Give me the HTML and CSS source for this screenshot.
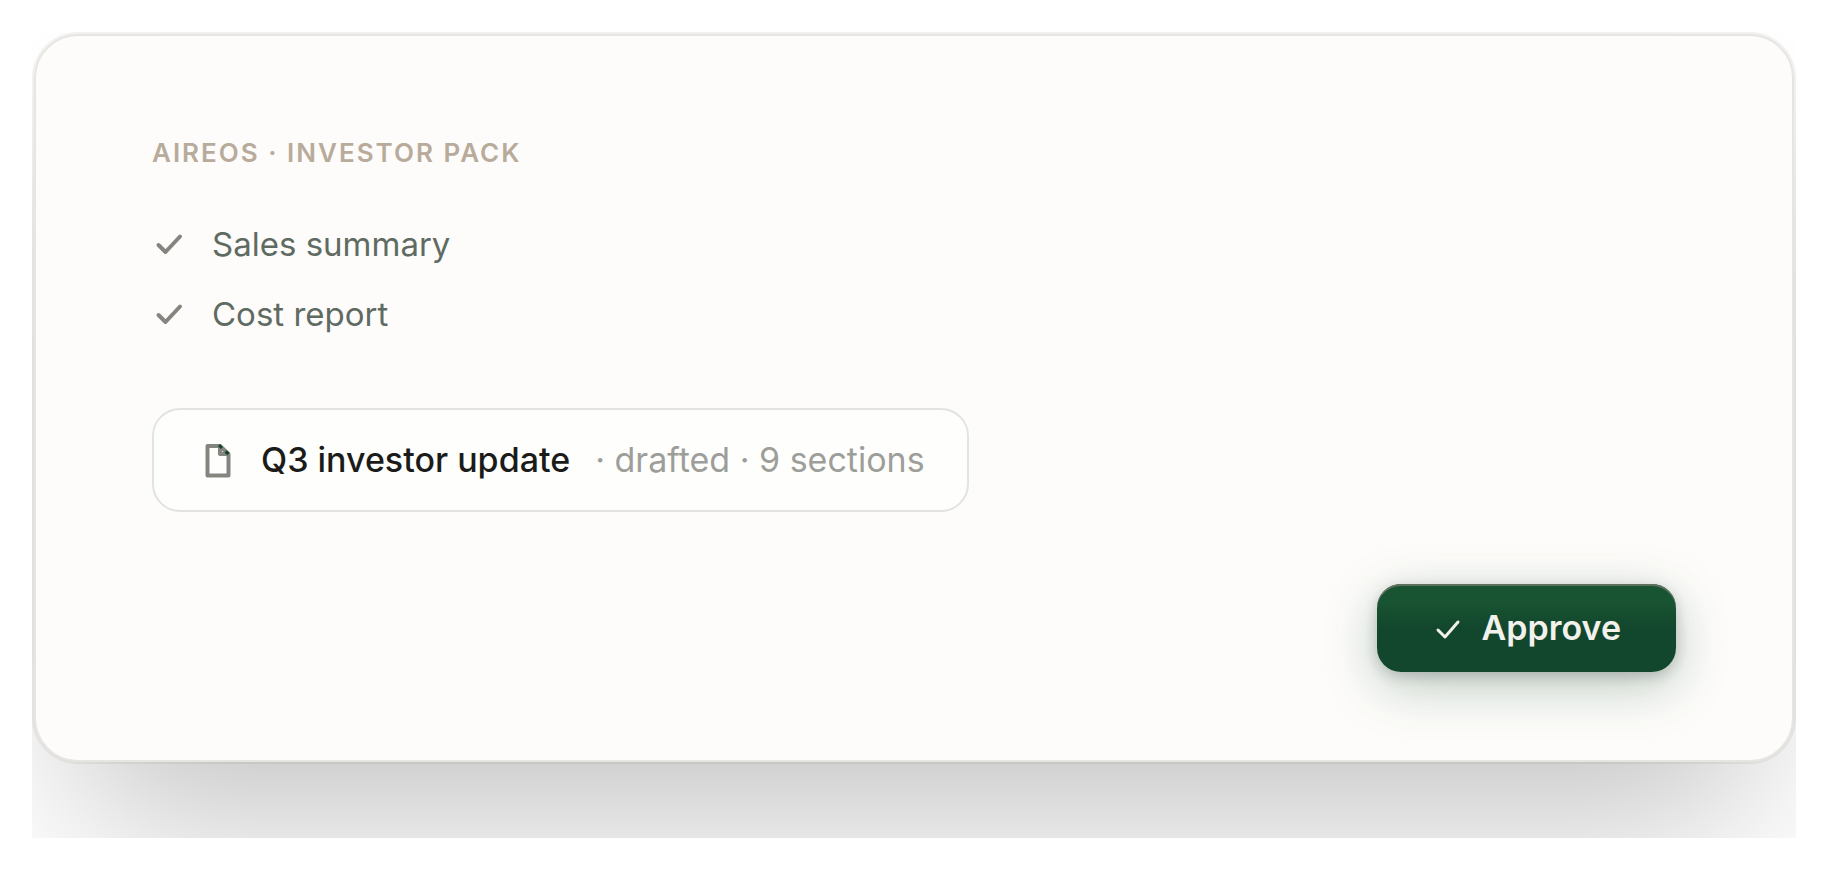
FILE: index.html
```html
<!DOCTYPE html>
<html lang="en">
<head>
  <meta charset="UTF-8">
  <title>Aireos - Investor Pack</title>
  <link rel="stylesheet" href="styles.css">
</head>
<body>

  <main class="stage">
    <section class="card">
      <h2>AIREOS · INVESTOR PACK</h2>

      <ul class="checklist">
        <li>
          <svg class="icon" viewBox="0 0 36 36" aria-hidden="true"><path d="M6.5 19L13.5 26L28 10.5"/></svg>
          <span>Sales summary</span>
        </li>
        <li>
          <svg class="icon" viewBox="0 0 36 36" aria-hidden="true"><path d="M6.5 19L13.5 26L28 10.5"/></svg>
          <span>Cost report</span>
        </li>
      </ul>

      <div class="draft">
        <svg class="icon" viewBox="0 0 36 36" aria-hidden="true">
          <path d="M7.5 4H20L28.5 12V33.5H7.5Z"/>
          <path class="fold" d="M20 4V12H28.5"/>
          <path class="crease" d="M19 3L22 6M25.5 9.5L28.5 12"/>
        </svg>
        <strong>Q3 investor update</strong>
        <span class="meta">· drafted · 9 sections</span>
      </div>

      <button type="button" class="approve">
        <svg class="icon" viewBox="0 0 36 36" aria-hidden="true"><path d="M6 20L13 27L26 12"/></svg>
        Approve
      </button>
    </section>
  </main>

</body>
</html>
```
FILE: styles.css
```css
* {
  box-sizing: border-box;
}

body {
  margin: 0;
  padding: 32px;
  background-color: #fff;
  font-family: Inter, "Liberation Sans", sans-serif;
  font-size: 34px;
  line-height: 40px;
}

/* clips the card shadow at its edges */
.stage {
  padding: 2px 2px 76px;
  overflow: hidden;
}

.card {
  display: flex;
  flex-direction: column;
  align-items: flex-start;
  padding: 100px 116px 88px;
  background-color: #fdfcfa;
  border: 2px solid #e5e6e1;
  border-radius: 44px;
  box-shadow: 0 0 0 2px rgba(60,40,20,0.06), 0 100px 160px -44px rgba(0,0,0,0.24);
}

h2 {
  margin: 0;
  font-size: 26px;
  line-height: 34px;
  font-weight: 600;
  letter-spacing: 2px;
  color: #b8ab9b;
}

.checklist {
  display: flex;
  flex-direction: column;
  gap: 30px;
  margin: 54px 0 0;
  padding: 0;
  list-style: none;
  font-size: 33px;
  color: #5f6b62;
}

.checklist li {
  display: flex;
  align-items: center;
  gap: 24px;
}

.icon {
  width: 36px;
  height: 36px;
  flex: none;
  fill: none;
  stroke: #858580;
  stroke-width: 4;
  stroke-linecap: round;
  stroke-linejoin: round;
}

.draft {
  display: flex;
  align-items: center;
  gap: 25px;
  margin-top: 74px;
  padding: 30px 42px 30px 46px;
  background-color: #fefefd;
  border: 2px solid #e2e4e1;
  border-radius: 28px;
}

.draft .icon {
  stroke-linecap: butt;
}

.draft .crease {
  stroke: #12472d;
  stroke-width: 3;
}

.draft strong {
  font-weight: 500;
  color: #1b1c19;
}

.meta {
  color: #9d9e99;
}

.approve {
  display: flex;
  align-items: center;
  gap: 14px;
  align-self: flex-end;
  margin-top: 72px;
  padding: 24px 55px;
  border: none;
  border-radius: 24px;
  background: linear-gradient(#195432 20%, #12472d 50%);
  box-shadow: inset 0 2px 0 #60705f, 0 4px 14px rgba(0,0,0,0.18), 0 14px 52px rgba(18,71,45,0.28);
  color: #f2f1ec;
  font: inherit;
  font-weight: 600;
  cursor: pointer;
}

.approve .icon {
  stroke: #f2f1ec;
  stroke-width: 3;
}
```
